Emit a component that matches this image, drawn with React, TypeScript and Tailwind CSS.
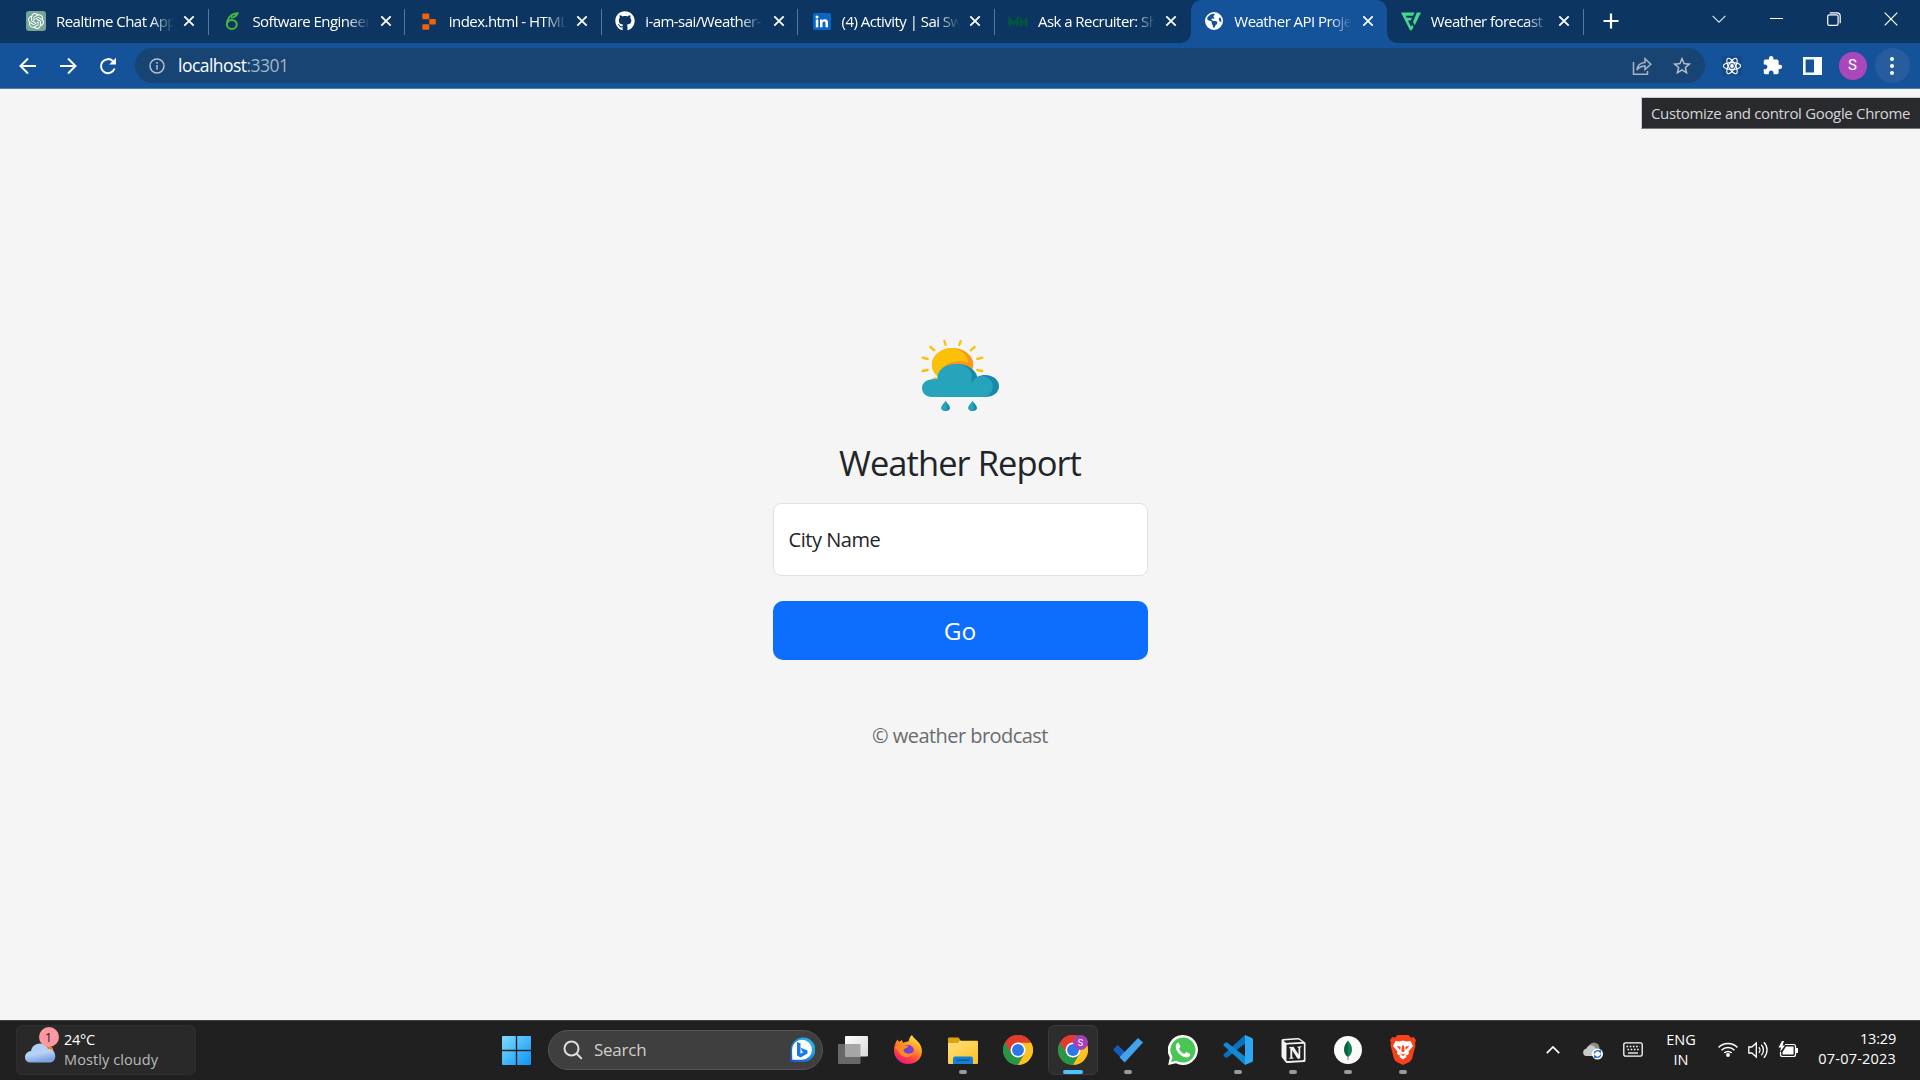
import React from 'react';
import { SiOpenai, SiNotion } from 'react-icons/si';
import { FaGithub, FaEarthAmericas } from 'react-icons/fa6';
import { MdExtension, MdStarBorder } from 'react-icons/md';

const ReactGlyph = () => (
  <svg viewBox="0 0 20 20" className="size-5" fill="none" stroke="#fff" strokeWidth="1.1">
    <rect width="20" height="20" fill="#154a86" stroke="none" />
    <circle cx="10" cy="10" r="1.9" fill="#fff" stroke="none" />
    <ellipse cx="10" cy="10" rx="8.7" ry="3.4" />
    <ellipse cx="10" cy="10" rx="8.7" ry="3.4" transform="rotate(60 10 10)" />
    <ellipse cx="10" cy="10" rx="8.7" ry="3.4" transform="rotate(120 10 10)" />
  </svg>
);

const favs: Record<string, React.ReactNode> = {
  gpt: (
    <span className="flex size-5 items-center justify-center rounded-[3px] bg-[#74a596]">
      <SiOpenai className="size-[16px] text-white" />
    </span>
  ),
  leaf: (
    <svg viewBox="0 0 20 20" className="size-5" fill="none" stroke="#48b83c">
      <ellipse cx="9.8" cy="13.4" rx="4.9" ry="4.5" strokeWidth="2" />
      <path d="M5 13C5 7.500 8.500 3 15.500 2.200c-.8 2.600-3 4-6.500 4.600" strokeWidth="1.900" />
    </svg>
  ),
  replit: (
    <svg viewBox="0 0 20 20" className="size-5" fill="#f26207">
      <rect x="3.3" y="2.6" width="7" height="5.6" rx="1" />
      <rect x="10.3" y="8" width="6.5" height="5.4" rx="1" />
      <rect x="3.3" y="13.2" width="7" height="5.6" rx="1" />
    </svg>
  ),
  github: <FaGithub className="size-5 text-white" />,
  linkedin: (
    <svg viewBox="0 0 20 20" className="size-5">
      <rect x="1" y="2" width="18" height="17" rx="1.5" fill="#0a66c2" />
      <g fill="#fff">
        <circle cx="5" cy="6" r="1.5" />
        <rect x="3.8" y="8.5" width="2.5" height="7.8" />
        <path d="M8 8.5h2.3v1.1c.5-.8 1.4-1.3 2.6-1.3 2.5 0 3.1 1.6 3.1 3.8v4.2h-2.5v-3.8c0-1-.1-2-1.4-2s-1.6 1-1.6 2v3.8H8z" />
      </g>
    </svg>
  ),
  mh: (
    <svg viewBox="0 0 20 20" className="size-5" fill="none" stroke="#04543f" strokeWidth="2.6">
      <path d="M1.5 15.500V8L5.500 13l4-5V15.500M13 6.500V15.500M18.300 6.500V15.500M12 11h7" />
    </svg>
  ),
  globe: <FaEarthAmericas className="size-[18px] text-white" />,
  fv: (
    <svg viewBox="0 0 20 20" className="size-5" fill="#45d88e">
      <path d="M0 1.500h13.500L12 4.700H4.600l1 2h5.500L9.700 9.600H7l3 6.200 1.100-2.400 1.400 2.900-1.900 3H9z" />
      <path d="M15.800 1.500H20l-6.300 12.800-1.700-3.400z" />
    </svg>
  ),
};

const tabs = [
  { icon: 'gpt', title: 'Realtime Chat App' },
  { icon: 'leaf', title: 'Software Engineer' },
  { icon: 'replit', title: 'index.html - HTML' },
  { icon: 'github', title: 'i-am-sai/Weather-' },
  { icon: 'linkedin', title: '(4) Activity | Sai Sw' },
  { icon: 'mh', title: 'Ask a Recruiter: Sh' },
  { icon: 'globe', title: 'Weather API Proje', active: true },
  { icon: 'fv', title: 'Weather forecast |' },
];

const Cross = () => (
  <svg viewBox="0 0 12 12" className="size-3 shrink-0" stroke="#fff" strokeWidth="1.8">
    <path d="M1.3 1.3l9.4 9.4M10.7 1.3L1.3 10.7" />
  </svg>
);

function Tab({ icon, title, active, divider }: { icon: string; title: string; active?: boolean; divider: boolean }) {
  return (
    <div className={`relative flex h-[43px] w-[196.4px] shrink-0 items-center pb-px pl-[13.4px] ${active ? 'rounded-t-[10px] bg-[#14529a]' : ''}`}>
      <span className="flex w-5 shrink-0 items-center justify-center">{favs[icon]}</span>
      <span className="ml-[10px] w-[119px] shrink-0 overflow-hidden pb-px text-[15px] leading-6 tracking-[-0.54px] whitespace-nowrap text-white [mask-image:linear-gradient(90deg,#000_80%,transparent_99%)]">
        {title}
      </span>
      <span className="ml-[8.500px]"><Cross /></span>
      {divider && <span className="absolute top-[9px] right-0 h-[26px] w-px bg-[#55779d]" />}
      {active && (
        <>
          <span className="absolute bottom-0 -left-[10px] size-[10px] bg-[radial-gradient(circle_at_0_0,transparent_9.5px,#14529a_10px)]" />
          <span className="absolute -right-[10px] bottom-0 size-[10px] bg-[radial-gradient(circle_at_100%_0,transparent_9.5px,#14529a_10px)]" />
        </>
      )}
    </div>
  );
}

function TabStrip() {
  return (
    <div className="flex h-[43px] bg-[#0c3561] pl-[12.600px]">
      {tabs.map((t, i) => (
        <Tab key={t.title} {...t} divider={i !== 5 && i !== 6} />
      ))}
      <svg viewBox="0 0 16 16" className="mt-[13px] ml-[19.400px] size-4" stroke="#fff" strokeWidth="2.2">
        <path d="M8 .5v15M.5 8h15" />
      </svg>
      <div className="ml-auto flex h-[37px] w-[230px] items-center">
        <span className="flex w-[57.5px] justify-center">
          <svg viewBox="0 0 14 8" className="w-[14px]" fill="none" stroke="#dfe6ee" strokeWidth="1.1"><path d="M.6.8L7 7.2 13.4.8" /></svg>
        </span>
        <span className="flex w-[57.5px] justify-center"><span className="h-px w-[13px] bg-white" /></span>
        <span className="flex w-[57.5px] justify-center">
          <svg viewBox="0 0 14 14" className="w-[14px]" fill="none" stroke="#fff" strokeWidth="1.2">
            <rect x=".7" y="2.9" width="10.4" height="10.4" rx="1.6" />
            <path d="M2.8 .8h7.2a3.2 3.2 0 0 1 3.2 3.2v7.2" />
          </svg>
        </span>
        <span className="flex w-[57.5px] justify-center">
          <svg viewBox="0 0 14 14" className="w-[14px]" stroke="#fff" strokeWidth="1.2"><path d="M.7.7l12.6 12.6M13.3.7L.7 13.3" /></svg>
        </span>
      </div>
    </div>
  );
}

function Toolbar() {
  return (
    <div className="flex h-[46px] items-center border-b border-[#4a80b8] bg-[#14529a] pl-[17.500px]">
      <svg viewBox="0 0 20 20" className="size-5" fill="none" stroke="#fff" strokeWidth="2"><path d="M18 10H3M10 2.500L2.500 10l7.500 7.500" /></svg>
      <svg viewBox="0 0 20 20" className="ml-5 size-5" fill="none" stroke="#fff" strokeWidth="2"><path d="M2 10h15M10 2.500l7.500 7.500-7.500 7.500" /></svg>
      <svg viewBox="0 0 20 20" className="ml-5 size-5" fill="none" stroke="#fff" strokeWidth="2">
        <path d="M16.600 12.500A7 7 0 1 1 15 5.200" />
        <path d="M18 1.800V8.600H11.200z" fill="#fff" stroke="none" />
      </svg>
      <div className="ml-[17.500px] flex h-[35px] w-[1570px] items-center rounded-full bg-[#184474] pr-[12px] pl-[14px]">
        <svg viewBox="0 0 16 16" className="size-4" fill="none" stroke="#b3bfcc" strokeWidth="1.500">
          <circle cx="8" cy="8" r="7" /><path d="M8 7v4.700M8 4.100v1.700" />
        </svg>
        <span className="ml-[13px] text-[17.500px] tracking-[-0.53px] text-white">localhost<span className="text-[#a3b6ca]">:3301</span></span>
        <svg viewBox="0 0 20 20" className="ml-auto size-5" fill="none" stroke="#a9b4c1" strokeWidth="1.500">
          <path d="M1.500 6v12.200h14V15" />
          <path d="M5 14c.5-4.800 3-7.400 8-7.600V2.800l5.800 5.400-5.800 5.400V10C9.500 10 7 11 5 14z" />
        </svg>
        <MdStarBorder className="ml-[19px] size-[22px] text-[#b9bfc8]" />
      </div>
      <span className="ml-[17px]"><ReactGlyph /></span>
      <MdExtension className="ml-[19.500px] size-[21px] text-white" />
      <svg viewBox="0 0 19 18" className="ml-[20px] w-[19px]"><path fill="#fff" fillRule="evenodd" d="M0 0h19v18H0zM2.600 2.600v12.800h8.400V2.600z" /></svg>
      <span className="ml-[17px] flex size-7 items-center justify-center rounded-full bg-[#ab47bc] font-[Roboto] text-[15px] text-white">S</span>
      <span className="ml-2 flex size-[35px] flex-col items-center justify-center gap-[3px] rounded-full bg-[#275c9e]">
        <i className="size-1 rounded-full bg-white" /><i className="size-1 rounded-full bg-white" /><i className="size-1 rounded-full bg-white" />
      </span>
    </div>
  );
}

function WeatherLogo() {
  return (
    <svg viewBox="0 0 300 270" className="mt-[241px] h-[90px] w-[100px] shrink-0">
      <g stroke="#fbc108" strokeWidth="7" strokeLinecap="round">
        <path d="M103 33l4 12M152 33l-4 12M61 51l12 10M194 51l-12 10M38 83l15 4M217 83l-15 4M38 123l15-3M217 123l-15-3M70 148l8-3" />
      </g>
      <ellipse cx="128" cy="104" rx="62" ry="50" fill="#f7981d" />
      <path d="M128 54c-35 0-62 22-62 50 0 14 7 27 18 36 8-30 32-46 66-46 10 0 18 1 25 4-2-20-20-40-47-44z" fill="#fbc108" />
      <path d="M142 102c32 0 56 19 60 39 8-4 15-6 24-6 24 0 41 15 41 33 0 20-17 33-42 33h-55z" fill="#168aa8" />
      <path d="M66 201c-18 0-30-12-30-27 0-17 15-29 46-27-1-27 23-46 58-45 26 1 44 16 45 37l-1 24c4-14 18-24 36-26 17 4 28 17 28 32 0 17-11 30-28 32z" fill="#27a3bc" />
      <g fill="#168aa8">
        <path d="M107 213c5 8 13 14 13 21 0 6-6 9-13 9s-13-3-13-9c0-7 8-13 13-21zM188 213c5 8 13 14 13 21 0 6-6 9-13 9s-13-3-13-9c0-7 8-13 13-21z" />
      </g>
      <g fill="#27a3bc">
        <path d="M107 213c1 8 4 12 4 20 0 6-3 9-7 9-6-1-10-4-10-8 0-7 8-13 13-21zM188 213c1 8 4 12 4 20 0 6-3 9-7 9-6-1-10-4-10-8 0-7 8-13 13-21z" />
      </g>
    </svg>
  );
}

const Chrome = () => (
  <svg viewBox="0 0 48 48" className="size-[30px]">
    <circle cx="24" cy="24" r="24" fill="#e33b2e" />
    <path d="M3.200 12A24 24 0 0 0 24 48l10.400-18L24 24z" fill="#269746" />
    <path d="M24 48A24 24 0 0 0 44.800 12H24v12l10.400 6z" fill="#fcc31e" />
    <path d="M3.200 12l10.400 18L24 24V12h20.800A24 24 0 0 0 3.200 12z" fill="#e33b2e" />
    <circle cx="24" cy="24" r="12" fill="#fff" />
    <circle cx="24" cy="24" r="9.500" fill="#2a78ea" />
  </svg>
);

const Firefox = () => (
  <svg viewBox="0 0 30 30" className="size-[30px]">
    <defs>
      <linearGradient id="ff" x1=".8" y1="0" x2=".3" y2="1"><stop offset="0" stopColor="#fff04a" /><stop offset=".4" stopColor="#ff9a22" /><stop offset=".75" stopColor="#ff3c48" /><stop offset="1" stopColor="#e31587" /></linearGradient>
      <radialGradient id="fp"><stop offset="0" stopColor="#5b4ad8" /><stop offset="1" stopColor="#9b33cf" /></radialGradient>
    </defs>
    <path d="M19 0c1 3 5 5 7.500 8.500C29 12 29.500 16 28.500 20 26.500 26 21 29 15 29 7 29 1 23 1 15.500 1 11 2.500 7 4.500 4.500L6 7l3-2 1 3c2-1 4-1.500 5.500-1.500C16 4 17 1.500 19 0z" fill="url(#ff)" />
    <circle cx="15" cy="15.500" r="5.800" fill="url(#fp)" />
    <path d="M1.500 13c3-4 8-3.500 10-2l4-.5c-.5 2.500-4 3-5 4 0 4 6 6 10.500 2-1 5-7 7-11.500 4.500C5 18.500 6 14 1.500 13z" fill="#ff8b25" />
  </svg>
);

const Explorer = () => (
  <svg viewBox="0 0 30 27" className="mt-px w-[30px]">
    <defs><linearGradient id="fo" x1="0" y1="0" x2="1" y2="1"><stop stopColor="#ffe07a" /><stop offset="1" stopColor="#fcc126" /></linearGradient></defs>
    <path d="M0 1.500Q0 .5 1 .5h9.500L13 4h-2L9 6H0z" fill="#e0a10c" />
    <path d="M0 6h9l2.500-2.200H29q1 0 1 1V26q0 1-1 1H1q-1 0-1-1z" fill="url(#fo)" />
    <path d="M5 27v-5.500Q5 19.500 7 19.500h16q2 0 2 2V27z" fill="#1480d3" />
    <path d="M8.500 23.200h13" stroke="#0b4f92" strokeWidth="1.200" />
  </svg>
);

const Todo = () => (
  <svg viewBox="0 0 30 26" className="w-[30px]">
    <path d="M4.700 8L0 12.700l11.600 11.800 5-5z" fill="#185abd" />
    <path d="M25 1l5 4.500L11.700 25.500l-5.200-5.300z" fill="#41a2ee" />
  </svg>
);

const Whats = () => (
  <svg viewBox="0 0 30 30" className="size-[30px]">
    <path d="M15 0a15 15 0 1 1-7 28.300L.2 30l1.600-7.600A15 15 0 0 1 15 0z" fill="#fff" />
    <path d="M15 2.400a12.600 12.600 0 1 1-6.600 23.400L3.200 27l1.200-5.200A12.600 12.600 0 0 1 15 2.400z" fill="#49c656" />
    <path d="M10.400 7.600l2.100 4-1.500 2.200c1 2.200 2.800 4 5.200 5.100l2.100-1.900 4 2c.2 2-1.800 3.500-4 3.500C13 22 7.800 16.500 7.800 11.500c0-2 1.200-3.500 2.600-3.900z" fill="#fff" />
  </svg>
);

const Code = () => (
  <svg viewBox="0 0 30 30" className="size-[30px]">
    <path d="M22 0L.8 19.200q-.8.800 0 1.700l1.700 1.600q.8.600 1.700 0L22 8.600z" fill="#0a72bd" />
    <path d="M22 30L.8 10.800q-.8-.8 0-1.700l1.700-1.600q.8-.6 1.700 0L22 21.400z" fill="#1489d3" />
    <path d="M22 0l7 3q1 .5 1 1.600v20.800q0 1.100-1 1.600l-7 3z" fill="#2fa6f2" />
  </svg>
);

const Notion = () => <SiNotion className="size-[25px] text-[#f4f4f4]" />;

const Mongo = () => (
  <svg viewBox="0 0 28 28" className="size-7">
    <circle cx="14" cy="14" r="14" fill="#fafafa" />
    <path d="M14 4.500c2.500 3 4 5.500 4 9s-1.500 6-4 7.500z" fill="#10804f" />
    <path d="M14 4.500c-2.500 3-4 5.500-4 9s1.500 6 4 7.500z" fill="#076344" />
    <path d="M14 20v4" stroke="#5a8a78" />
  </svg>
);

const Brave = () => (
  <svg viewBox="0 0 26 30" className="w-[26px]">
    <path d="M7.500 0h11l2.500 2.700 2.800-.6L26 5.300 25 8.500l.5 2-3.300 12.700Q21.500 25.500 19.500 27L13 30l-6.500-3q-2-1.500-2.700-3.800L.5 10.500l.5-2L0 5.300l2.200-3.200 2.800.6z" fill="#f8401b" />
    <path d="M5.500 6l4 .5L13 5.500l3.500 1 4-.5 2.500 5-4.500 5.500.5 2-2 2-1.500-1 1 2.500L13 24.500 9.500 22l1-2.500-1.500 1-2-2 .5-2L3 11z" fill="#fff" />
    <path d="M6.500 10.800l4.300 1-.6 3.200zM19.500 10.800l-4.300 1 .6 3.200zM12 10.500h2l.6 5.500L13 17.500 11.400 16zM10 18l3 1.500 3-1.500-3 3.200z" fill="#f8401b" />
  </svg>
);

const TaskView = () => (
  <svg viewBox="0 0 30 28" className="w-[30px]">
    <defs><linearGradient id="tv" x1="0" y1="0" x2="1" y2="1"><stop stopColor="#fff" /><stop offset="1" stopColor="#d8d8d8" /></linearGradient></defs>
    <rect x="0" y="8" width="22.500" height="20" rx="1" fill="#686868" />
    <rect x="7" y="0" width="23" height="20.500" rx="1" fill="url(#tv)" />
    <path d="M7 8h15.500v12.500H8q-1 0-1-1z" fill="#a6a6a6" />
  </svg>
);

const apps: { name: string; el: React.ReactNode; mark: 'none' | 'dot' | 'active' }[] = [
  { name: 'view', el: <TaskView />, mark: 'none' },
  { name: 'firefox', el: <Firefox />, mark: 'none' },
  { name: 'explorer', el: <Explorer />, mark: 'dot' },
  { name: 'chrome', el: <Chrome />, mark: 'none' },
  { name: 'chrome-s', el: <Chrome />, mark: 'active' },
  { name: 'todo', el: <Todo />, mark: 'dot' },
  { name: 'whatsapp', el: <Whats />, mark: 'none' },
  { name: 'code', el: <Code />, mark: 'dot' },
  { name: 'notion', el: <Notion />, mark: 'dot' },
  { name: 'mongo', el: <Mongo />, mark: 'dot' },
  { name: 'brave', el: <Brave />, mark: 'dot' },
];

function Taskbar() {
  return (
    <div className="flex h-[60px] items-center border-t border-[#3e4343] bg-[#202020] pb-px text-[14.5px] leading-5 text-white">
      <div className="ml-4 flex h-[50px] w-[180px] items-center rounded-md border border-[#2f2f2f] bg-[#292929]">
        <div className="relative ml-2 h-[42px] w-[36px]">
          <svg viewBox="0 0 36 42" className="size-full">
            <defs><linearGradient id="cl" x1="0" y1="0" x2=".3" y2="1"><stop stopColor="#aacdf8" /><stop offset=".6" stopColor="#b9d2f7" /><stop offset="1" stopColor="#7fa4e4" /></linearGradient></defs>
            <circle cx="23" cy="22" r="5.500" fill="#f47a1c" />
            <path d="M6 33.500c-8 0-8-10.500 0-11.500 1-8 13-11 17-2 9-.5 10 13.500 1 13.500z" fill="url(#cl)" />
          </svg>
          <span className="absolute -top-[2px] left-[13.500px] flex size-5 items-center justify-center rounded-full bg-[#fd97a2] text-[13px] text-[#222]">1</span>
        </div>
        <div className="ml-[3px] pb-px">
          <div className="tracking-[-0.3px]">24°C</div>
          <div className="tracking-[0.1px] text-[#bcbcbc]">Mostly cloudy</div>
        </div>
      </div>
      <svg viewBox="0 0 29 29" className="ml-[306px] size-[29px]">
        <defs><linearGradient id="wi" gradientUnits="userSpaceOnUse" x1="0" y1="0" x2="29" y2="29"><stop stopColor="#7fdcff" /><stop offset="1" stopColor="#0a94f8" /></linearGradient></defs>
        <path d="M1 0h12.800v13.800H0V1Q0 0 1 0zM15.200 0H28q1 0 1 1v12.800H15.200zM0 15.200h13.800V29H1q-1 0-1-1zM15.200 15.200H29V28q0 1-1 1H15.200z" fill="url(#wi)" />
      </svg>
      <div className="ml-[17px] flex h-10 w-[275px] items-center rounded-full border border-[#555] bg-[#3f3f3f] pr-[7px] pl-[14px]">
        <svg viewBox="0 0 20 20" className="size-5" fill="none" stroke="#ddd" strokeWidth="2" strokeLinecap="round"><circle cx="8.500" cy="8.500" r="7" /><path d="M13.700 13.700L18.200 18.200" /></svg>
        <span className="ml-[11px] text-[17px] tracking-[-0.250px] text-[#cfcfcf]">Search</span>
        <svg viewBox="0 0 26 26" className="ml-auto size-[26px]">
          <defs><linearGradient id="bi" x1="1" y1="0" x2="0" y2="1"><stop stopColor="#27c5f5" /><stop offset="1" stopColor="#1650c8" /></linearGradient></defs>
          <path d="M13 .5A12.300 12.300 0 1 1 13 25H1l.7-12A12.300 12.300 0 0 1 13 .5z" fill="url(#bi)" />
          <path d="M13 2.800A10 10 0 1 1 13 22.800H3.300L3 13A10 10 0 0 1 13 2.800z" fill="#fff" />
          <path d="M8 5l3.500 1.300v10.500l3-1.700-1.500-.8-1.200-3.500 6.700 2.600v3.200l-7 4-3.500-2z" fill="#1c78e4" />
        </svg>
      </div>
      <div className="ml-[2.500px] flex">
        {apps.map(a => (
          <div key={a.name} className="flex h-[50px] w-[55px] items-center justify-center">
            <div className={`relative flex size-[50px] items-center justify-center rounded-md ${a.mark === 'active' ? 'border border-[#3a3a3a] bg-[#2d2d2d]' : ''}`}>
              {a.el}
              {a.mark === 'active' && (
                <>
                  <span className="absolute top-[9px] left-[24px] flex size-[15px] items-center justify-center rounded-full bg-[#a541b8] font-[Roboto] text-[9px] text-white">S</span>
                  <span className="absolute bottom-0 h-1 w-5 rounded-full bg-[#4cc2ff]" />
                </>
              )}
              {a.mark === 'dot' && <span className="absolute bottom-px h-1 w-2 rounded-full bg-[#9a9a9a]" />}
            </div>
          </div>
        ))}
      </div>
      <div className="ml-auto flex items-center pr-6 pb-px">
        <svg viewBox="0 0 14 8" className="w-[14px]" fill="none" stroke="#fff" strokeWidth="1.700"><path d="M.8 7.200L7 1l6.200 6.200" /></svg>
        <svg viewBox="0 0 20 18" className="ml-[23px] mt-[3px] w-5">
          <circle cx="11" cy="6" r="5.500" fill="#8b8b8b" /><path d="M3.500 14C-1 14-1 7 3.500 6.500c1-4.500 8-4.500 9 0 4 0 4 7.500 0 7.500z" fill="#c9c9c9" />
          <circle cx="14.500" cy="12" r="5.500" fill="#fff" /><path d="M11.200 11.500a3.400 3.400 0 0 1 6-1.500V8M17.800 12.500a3.400 3.400 0 0 1-6 1.500v2" fill="none" stroke="#1669c9" strokeWidth="1.300" />
        </svg>
        <svg viewBox="0 0 20 15" className="ml-5 w-5" fill="none" stroke="#fff" strokeWidth="1.300">
          <rect x=".8" y=".8" width="18.400" height="13.400" rx="1.800" />
          <path d="M3.500 4.500h13M4.500 7.500h12" strokeDasharray="1.600 1.600" /><path d="M5 11h10" />
        </svg>
        <div className="ml-[22px] w-[32px] pt-px text-center"><div>ENG</div><div>IN</div></div>
        <svg viewBox="0 0 20 15" className="ml-[21px] w-5" fill="none" stroke="#fff" strokeWidth="1.500">
          <path d="M.6 5.500a13.300 13.300 0 0 1 18.800 0M3.500 8.300a9.200 9.200 0 0 1 13 0M6.300 11a5.200 5.200 0 0 1 7.400 0" /><circle cx="10" cy="13" r="1.900" fill="#fff" stroke="none" />
        </svg>
        <svg viewBox="0 0 20 18" className="ml-[10px] w-5" fill="none" stroke="#fff" strokeWidth="1.300">
          <path d="M.8 6h3l4.500-4v14L3.800 12h-3z" /><path d="M10.800 6.200a4 4 0 0 1 0 5.600M13.300 3.800a7.300 7.300 0 0 1 0 10.400M15.900 1.300a11 11 0 0 1 0 15.400" />
        </svg>
        <svg viewBox="0 0 20 17" className="ml-[10px] w-5" fill="none" stroke="#fff" strokeWidth="1.200">
          <path d="M7 3.500h8.500q2 0 2 2v8q0 2-2 2h-11q-2 0-2-2V11" /><path d="M8 5.500h7.500v8h-11V11z" fill="#fff" stroke="none" /><path d="M18 7.500h1.500v4H18z" fill="#fff" /><path d="M4 0L.5 6.500H3L2 11l5-6.500H4.500L6 0z" fill="#fff" stroke="none" />
        </svg>
        <div className="ml-[15px] w-[83px] pb-px text-right"><div className="tracking-[-0.200px]">13:29</div><div className="tracking-[0.200px]">07-07-2023</div></div>
      </div>
    </div>
  );
}

export default function App() {
  return (
    <div className="relative flex h-[1080px] w-[1920px] flex-col overflow-hidden bg-[#f5f5f5] font-['Open_Sans','Noto_Sans',sans-serif]">
      <TabStrip />
      <Toolbar />
      <main className="flex flex-1 flex-col items-center">
        <WeatherLogo />
        <h1 className="mt-[22px] text-[34.500px] leading-[42px] tracking-[-0.950px] text-[#212529]">Weather Report</h1>
        <div className="mt-[19px] flex h-[73px] w-[375px] items-center rounded-lg border border-[#dee2e6] bg-white px-[15px] text-[20px] tracking-[-0.450px] text-[#212529]">City Name</div>
        <button className="mt-[25px] h-[59px] w-[375px] rounded-[10px] bg-[#0d6efd] pt-[2px] text-[24.500px] text-white">Go</button>
        <p className="mt-[61px] text-[20px] leading-[30px] tracking-[-0.550px] text-[#6a6c6e]">© weather brodcast</p>
      </main>
      <Taskbar />
      <div className="absolute top-[97px] right-0 flex h-[32px] w-[279px] items-center border-t border-b border-l border-t-[#cbcbcb] border-b-[#77787a] border-l-[#cbcbcb] bg-[#292a2d] pl-[9px] text-[15px] tracking-[-0.330px] whitespace-nowrap text-[#d5d6d8]">
        Customize and control Google Chrome
      </div>
    </div>
  );
}
